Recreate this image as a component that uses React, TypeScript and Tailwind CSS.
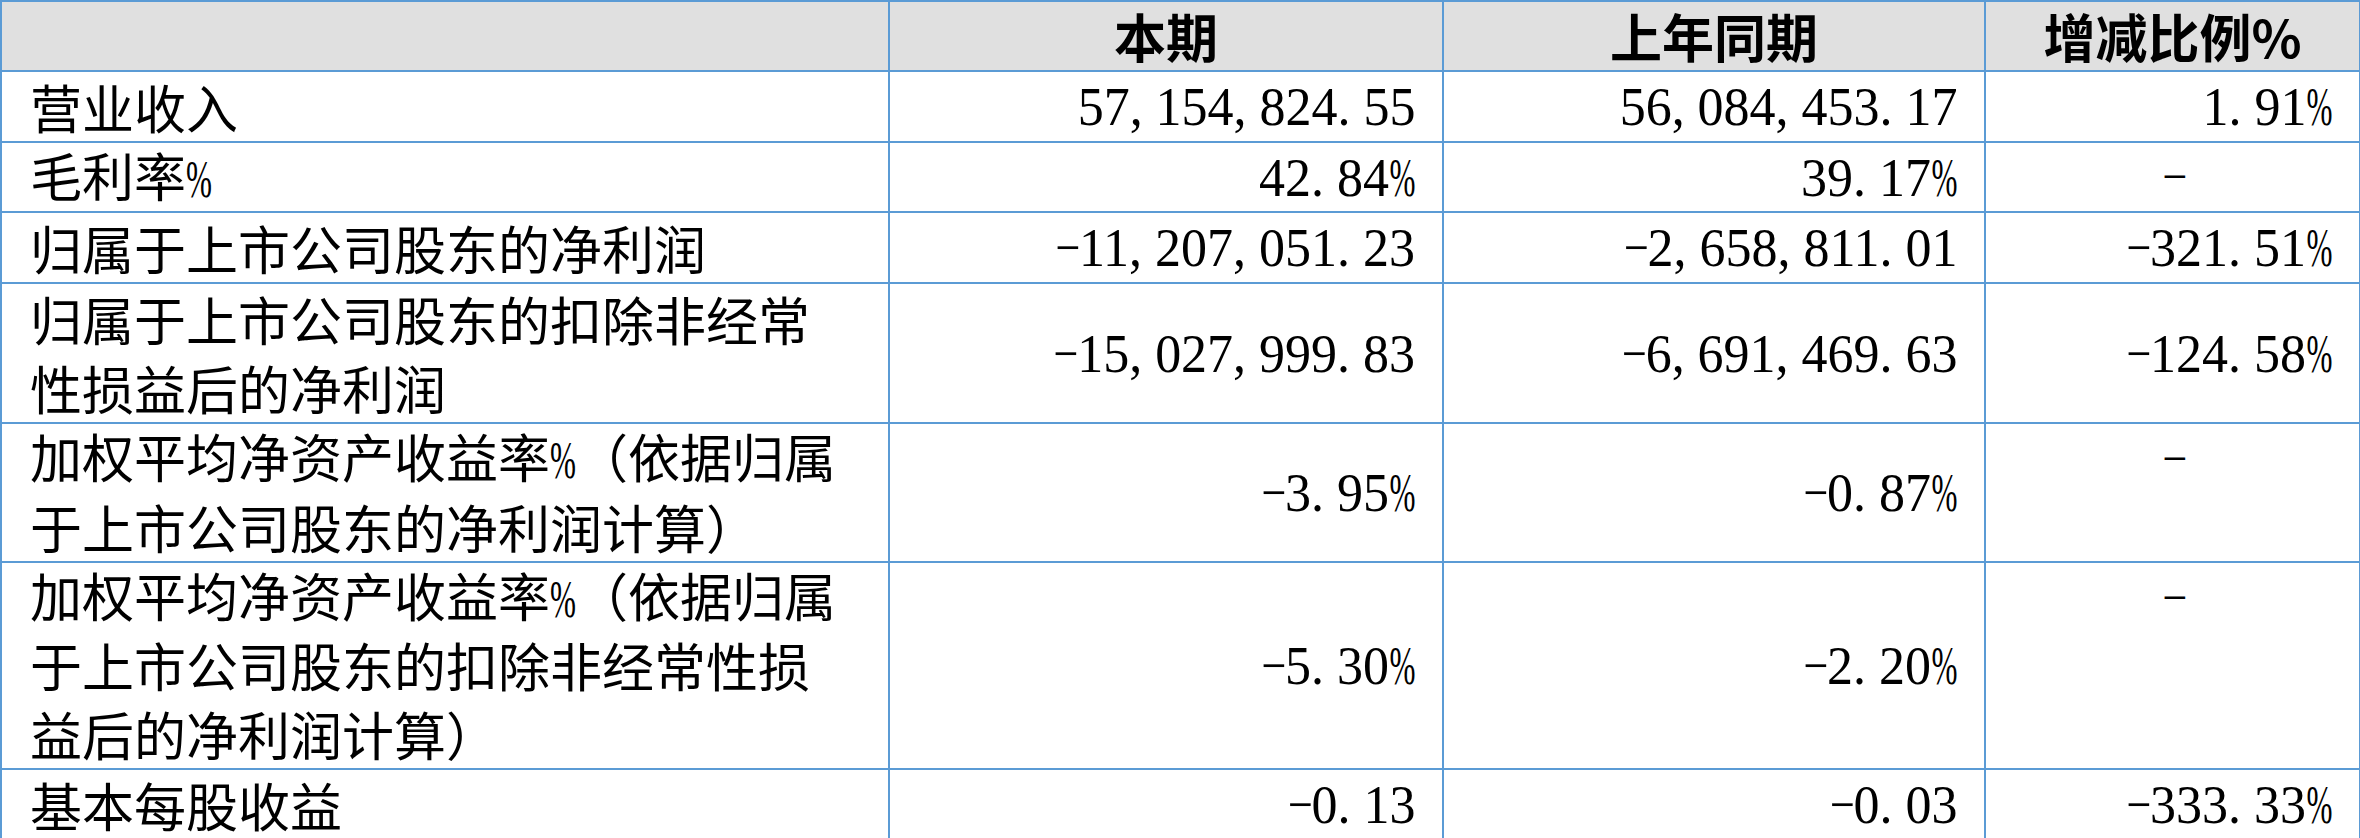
import React from "react";

const Num = ({ s, big }: { s: string; big?: boolean }) => (
  <span
    className={`font-['Liberation_Serif',serif] whitespace-nowrap ${
      big ? "inline-block text-[55px] scale-x-[0.945] origin-right" : ""
    }`}
  >
    {s.split("").map((c, i) => {
      if (/\d/.test(c)) return <span key={i}>{c}</span>;
      if (c === "," || c === ".")
        return (
          <span key={i} className="inline-block w-[0.5em] text-left">
            {c}
          </span>
        );
      if (c === "-")
        return (
          <span key={i} className="inline-block w-[0.5em] text-center">
            <span className="inline-block scale-x-[0.85]">−</span>
          </span>
        );
      if (c === "%")
        return (
          <span key={i} className="inline-block w-[0.5em] text-left">
            <span className="inline-block origin-left scale-x-[0.6]">%</span>
          </span>
        );
      return <span key={i}>{c}</span>;
    })}
  </span>
);

type Row = { label: string[]; a: string; b: string; c: string; h: string; lh: string; dashTop?: boolean };

const rows: Row[] = [
  { label: ["营业收入"], a: "57,154,824.55", b: "56,084,453.17", c: "1.91%", h: "h-[69px]", lh: "h-[69px]" },
  { label: ["毛利率%"], a: "42.84%", b: "39.17%", c: "-", h: "h-[68px]", lh: "h-[68px]" },
  { label: ["归属于上市公司股东的净利润"], a: "-11,207,051.23", b: "-2,658,811.01", c: "-321.51%", h: "h-[69px]", lh: "h-[69px]" },
  {
    label: ["归属于上市公司股东的扣除非经常", "性损益后的净利润"],
    a: "-15,027,999.83",
    b: "-6,691,469.63",
    c: "-124.58%",
    h: "h-[138px]",
    lh: "h-[69px]",
  },
  {
    label: ["加权平均净资产收益率%（依据归属", "于上市公司股东的净利润计算）"],
    a: "-3.95%",
    b: "-0.87%",
    c: "-",
    dashTop: true,
    h: "h-[137px]",
    lh: "h-[68.5px]",
  },
  {
    label: ["加权平均净资产收益率%（依据归属", "于上市公司股东的扣除非经常性损", "益后的净利润计算）"],
    a: "-5.30%",
    b: "-2.20%",
    c: "-",
    dashTop: true,
    h: "h-[205px]",
    lh: "h-[68.33px]",
  },
  { label: ["基本每股收益"], a: "-0.13", b: "-0.03", c: "-333.33%", h: "h-[69px]", lh: "h-[69px]" },
];

const bd = "border-2 border-[#5b9bd5] p-0";

const Label = ({ l }: { l: string }) =>
  l.includes("%") ? (
    <>
      {l.split("%")[0]}
      <Num s="%" />
      {l.split("%")[1]}
    </>
  ) : (
    <>{l}</>
  );

export default function App() {
  return (
    <div className="w-[2360px] h-[838px] bg-white overflow-hidden">
      <table className="table-fixed border-collapse w-[2359px] text-[52px] leading-none text-black font-['Noto_Sans_CJK_SC',sans-serif]">
        <colgroup>
          <col className="w-[888px]" />
          <col className="w-[554px]" />
          <col className="w-[542px]" />
          <col className="w-[375px]" />
        </colgroup>
        <thead>
          <tr className="bg-[#e0e0e0]">
            <th className={bd}>
              <div className="h-[68px]"></div>
            </th>
            <th className={bd}>
              <div className="h-[68px] leading-[68px] text-center font-bold">本期</div>
            </th>
            <th className={bd}>
              <div className="h-[68px] leading-[68px] text-center font-bold">上年同期</div>
            </th>
            <th className={bd}>
              <div className="h-[68px] leading-[68px] text-center font-bold">增减比例%</div>
            </th>
          </tr>
        </thead>
        <tbody>
          {rows.map((r, i) => (
            <tr key={i}>
              <td className={bd}>
                <div className={`${r.h} pl-[28px] flex flex-col whitespace-nowrap font-normal`}>
                  {r.label.map((l, j) => (
                    <div key={j} className={`${r.lh} flex items-center`}>
                      <span>
                        <Label l={l} />
                      </span>
                    </div>
                  ))}
                </div>
              </td>
              <td className={bd}>
                <div className={`${r.h} pr-[27px] flex items-center justify-end`}>
                  <Num s={r.a} big />
                </div>
              </td>
              <td className={bd}>
                <div className={`${r.h} pr-[27px] flex items-center justify-end`}>
                  <Num s={r.b} big />
                </div>
              </td>
              <td className={bd}>
                {r.c === "-" ? (
                  <div className={`${r.h} flex flex-col items-center`}>
                    <div className={`${r.dashTop ? "h-[69px]" : "h-full"} flex items-center`}>
                      <Num s="-" />
                    </div>
                  </div>
                ) : (
                  <div className={`${r.h} pr-[27px] flex items-center justify-end`}>
                    <Num s={r.c} big />
                  </div>
                )}
              </td>
            </tr>
          ))}
        </tbody>
      </table>
    </div>
  );
}
